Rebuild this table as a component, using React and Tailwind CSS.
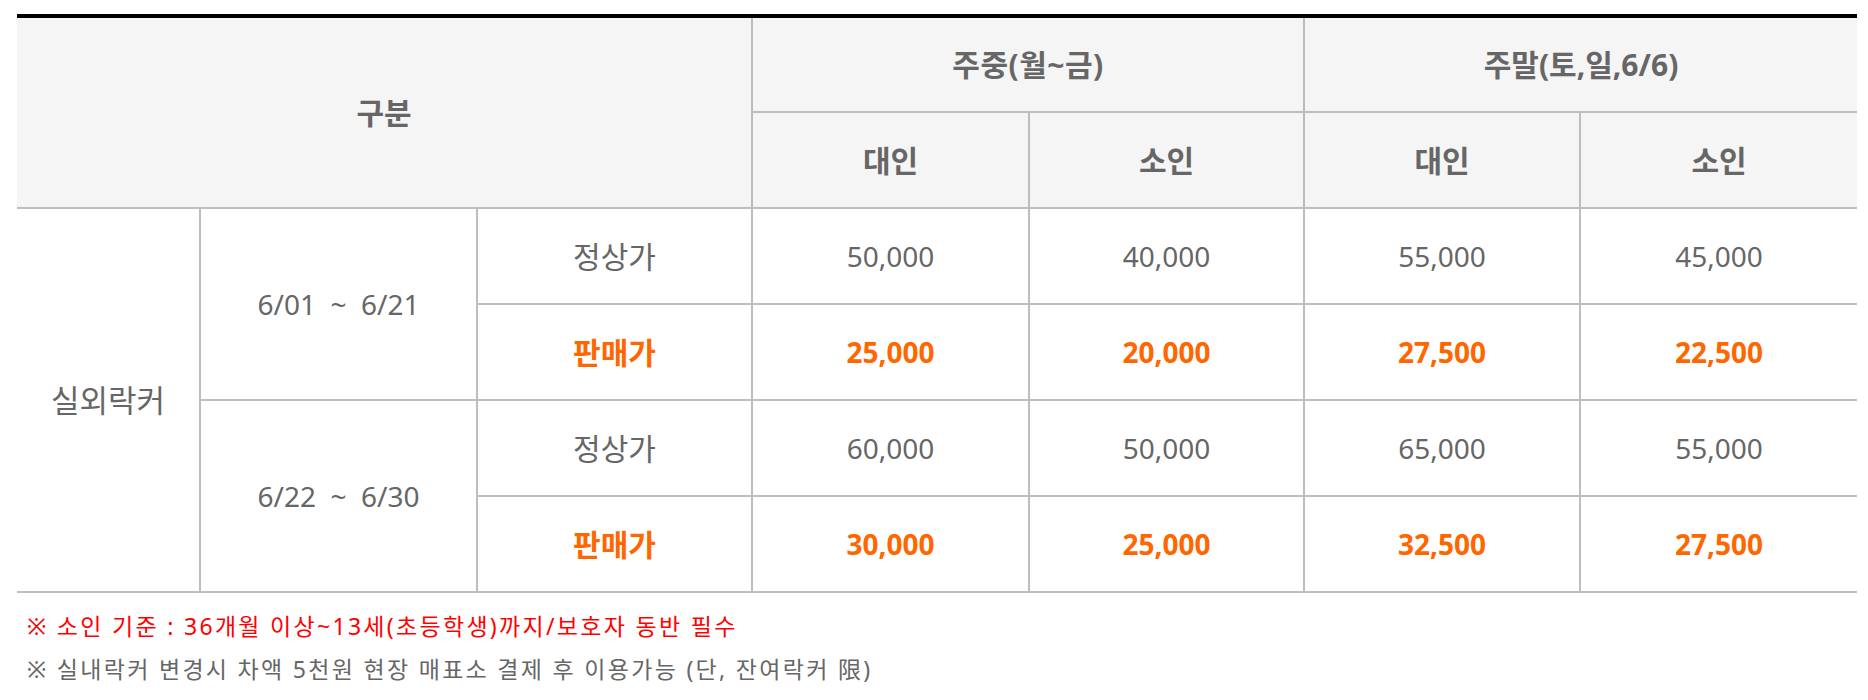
import React from "react";

const periods = [
  { range: "6/01\u00a0 ~ \u00a06/21", normal: ["50,000", "40,000", "55,000", "45,000"], sale: ["25,000", "20,000", "27,500", "22,500"] },
  { range: "6/22\u00a0 ~ \u00a06/30", normal: ["60,000", "50,000", "65,000", "55,000"], sale: ["30,000", "25,000", "32,500", "27,500"] },
];

export default function App() {
  const font = "font-['Noto_Sans','Noto_Sans_CJK_KR',sans-serif]";
  const b = "border-[#bdbdbd]";
  return (
    <div className={`bg-white w-[1868px] h-[700px] pt-[14px] pl-[17px] ${font}`}>
      <table className="w-[1840px] table-fixed border-collapse border-t-[4px] border-t-black text-[28px] text-[#666]">
        <colgroup>
          <col className="w-[183px]" />
          <col className="w-[277px]" />
          <col className="w-[275px]" />
          <col className="w-[277px]" />
          <col className="w-[275px]" />
          <col className="w-[276px]" />
          <col className="w-[277px]" />
        </colgroup>
        <thead>
          <tr className="h-[96px] bg-[#f5f5f5] text-[30px]">
            <th colSpan={3} rowSpan={2} className={`font-bold border-r-2 border-b-2 ${b}`}>구분</th>
            <th colSpan={2} className={`font-bold tracking-[0.5px] border-r-2 border-b-2 ${b}`}>주중(월~금)</th>
            <th colSpan={2} className={`font-bold border-b-2 ${b}`}>주말(토,일,6/6)</th>
          </tr>
          <tr className="h-[96px] bg-[#f5f5f5] text-[30px]">
            <th className={`font-bold border-r-2 border-b-2 ${b}`}>대인</th>
            <th className={`font-bold border-r-2 border-b-2 ${b}`}>소인</th>
            <th className={`font-bold border-r-2 border-b-2 ${b}`}>대인</th>
            <th className={`font-bold border-b-2 ${b}`}>소인</th>
          </tr>
        </thead>
        <tbody>
          {periods.map((p, i) => (
            <React.Fragment key={i}>
              <tr className="h-[96px]">
                {i === 0 && (
                  <td rowSpan={4} className={`text-center text-[31px] border-r-2 border-b-2 ${b}`}>실외락커</td>
                )}
                <td rowSpan={2} className={`text-center border-r-2 border-b-2 ${b}`}>{p.range}</td>
                <td className={`text-center text-[30px] border-r-2 border-b-2 ${b}`}>정상가</td>
                {p.normal.map((v, j) => (
                  <td key={j} className={`text-center border-b-2 ${b} ${j < 3 ? "border-r-2" : ""}`}>{v}</td>
                ))}
              </tr>
              <tr className="h-[96px]">
                <td className={`text-center text-[30px] font-bold text-[#ff6600] border-r-2 border-b-2 ${b}`}>판매가</td>
                {p.sale.map((v, j) => (
                  <td key={j} className={`text-center font-bold text-[#ff6600] border-b-2 ${b} ${j < 3 ? "border-r-2" : ""}`}>{v}</td>
                ))}
              </tr>
            </React.Fragment>
          ))}
        </tbody>
      </table>
      <div className="mt-[12px] pl-[10px] text-[23px] tracking-[2.3px] leading-[43px]">
        <p className="text-[#ff0000]">※ 소인 기준 : 36개월 이상~13세(초등학생)까지/보호자 동반 필수</p>
        <p className="text-[#666]">※ 실내락커 변경시 차액 5천원 현장 매표소 결제 후 이용가능 (단, 잔여락커 限)</p>
      </div>
    </div>
  );
}
